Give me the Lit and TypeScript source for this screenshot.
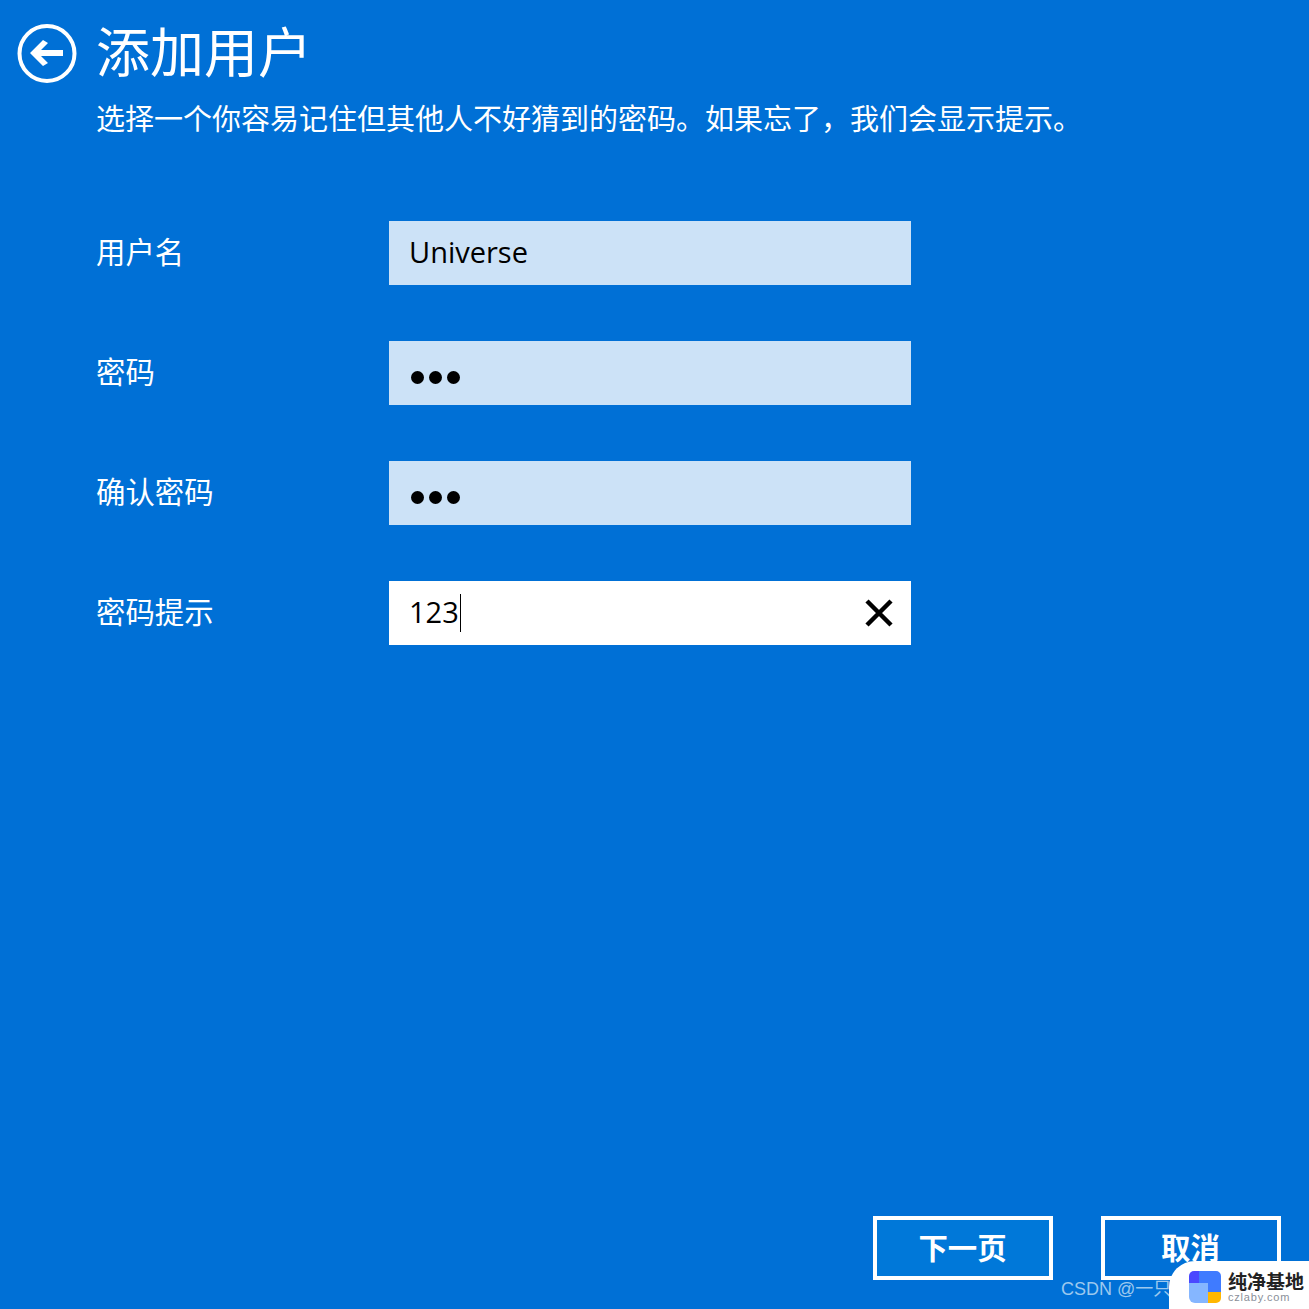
import { LitElement, html, css } from "lit";
import { customElement } from "lit/decorators.js";

@customElement("app-root")
export class AppRoot extends LitElement {
  static styles = css`
    :host { display: block; }
    .page {
      position: relative; width: 1309px; height: 1309px; overflow: hidden; box-sizing: border-box;
      background: #0070d6; color: #fff; font-family: "Noto Sans CJK SC", sans-serif;
      display: flex; flex-direction: column; padding: 0 28px 29px 0;
    }
    .head { display: flex; align-items: center; padding: 21px 0 0 17px; gap: 19px; height: 66px; }
    .back { width: 60px; height: 60px; display: block; flex: none; }
    h1 { margin: 0 0 9px; font-size: 54px; font-weight: 400; line-height: 66px; white-space: nowrap; }
    .sub { margin: 8px 0 0 96px; font-size: 29px; line-height: 44px; white-space: nowrap; }
    form { display: flex; flex-direction: column; gap: 56px; margin: 82px 0 0 96px; }
    .row { display: flex; align-items: center; height: 64px; }
    label { width: 293px; font-size: 29.4px; line-height: 58px; margin-bottom: 6px; }
    .input {
      width: 522px; height: 64px; box-sizing: border-box; padding: 0 17px 0 20px;
      background: #cce2f7; color: #000; display: flex; align-items: center;
      font-family: "Open Sans", sans-serif; font-size: 29px;
    }
    .input.focus { background: #fff; }
    .txt { margin-bottom: 3px; }
    .caret { width: 1px; height: 38px; background: #000; margin-left: 1px; }
    .clear { margin-left: auto; width: 30px; height: 30px; display: block; }
    .dots { display: flex; gap: 5px; margin: 8px 0 0 2px; }
    .dots i { width: 13px; height: 13px; border-radius: 50%; background: #000; display: block; }
    .actions { margin-top: auto; display: flex; justify-content: flex-end; gap: 48px; }
    button {
      width: 180px; height: 64px; box-sizing: border-box; border: 4px solid #fff; padding: 0 1px 2px 0;
      background: #0070d6; color: #fff; font: 700 29.4px/1 "Noto Sans CJK SC", sans-serif;
    }
    button.primary { background: #0078d9; }
    .mark {
      position: absolute; left: 1061px; top: 1277px; font: 18px/24px "Liberation Sans", "Noto Sans CJK SC", sans-serif;
      color: #9cc8ee; white-space: nowrap;
    }
    .badge {
      position: absolute; right: 0; bottom: 0; width: 140px; height: 48px; background: #fff;
      border-top-left-radius: 26px; display: flex; align-items: flex-start; box-sizing: border-box; padding: 10px 0 0 20px; gap: 7px;
    }
    .logo { width: 32px; height: 32px; display: block; flex: none; }
    .brand { display: flex; flex-direction: column; }
    .brand b { font: 700 19px/19px "Noto Sans CJK SC", sans-serif; color: #222; white-space: nowrap; }
    .brand span { font: 11px/13px "Liberation Sans", sans-serif; color: #8a8f99; letter-spacing: 0.8px; margin-top: 1px; }
  `;

  render() {
    const dots = html`<div class="dots"><i></i><i></i><i></i></div>`;
    return html`<div class="page">
      <div class="head">
        <svg class="back" viewBox="0 0 60 60" fill="none">
          <circle cx="30" cy="29.5" r="27.5" stroke="#fff" stroke-width="4"></circle>
          <path d="M13 29 26 16l5 3-7 7h22v6H24l7 7-5 3z" fill="#fff"></path>
        </svg>
        <h1>添加用户</h1>
      </div>
      <div class="sub">选择一个你容易记住但其他人不好猜到的密码。如果忘了，我们会显示提示。</div>
      <form>
        <div class="row"><label>用户名</label><div class="input"><span class="txt">Universe</span></div></div>
        <div class="row"><label>密码</label><div class="input">${dots}</div></div>
        <div class="row"><label>确认密码</label><div class="input">${dots}</div></div>
        <div class="row"><label>密码提示</label><div class="input focus"><span class="txt">123</span><span class="caret"></span>
          <svg class="clear" viewBox="0 0 30 30"><path d="M3 3 27 27M27 3 3 27" stroke="#000" stroke-width="4.5" fill="none"></path></svg>
        </div></div>
      </form>
      <div class="actions"><button class="primary">下一页</button><button>取消</button></div>
      <div class="mark">CSDN @一只</div>
      <div class="badge">
        <svg class="logo" viewBox="0 0 32 32">
          <path d="M10 0h17a5 5 0 0 1 5 5v16H19v-9h-9z" fill="#3f7bff"></path>
          <path d="M0 5a5 5 0 0 1 5-5h5v12H0z" fill="#4a48ff"></path>
          <path d="M0 12h19v20H6a6 6 0 0 1-6-6z" fill="#85b6ff"></path>
          <path d="M19 21h13v6a5 5 0 0 1-5 5h-8z" fill="#ffb700"></path>
        </svg>
        <div class="brand"><b>纯净基地</b><span>czlaby.com</span></div>
      </div>
    </div>`;
  }
}
